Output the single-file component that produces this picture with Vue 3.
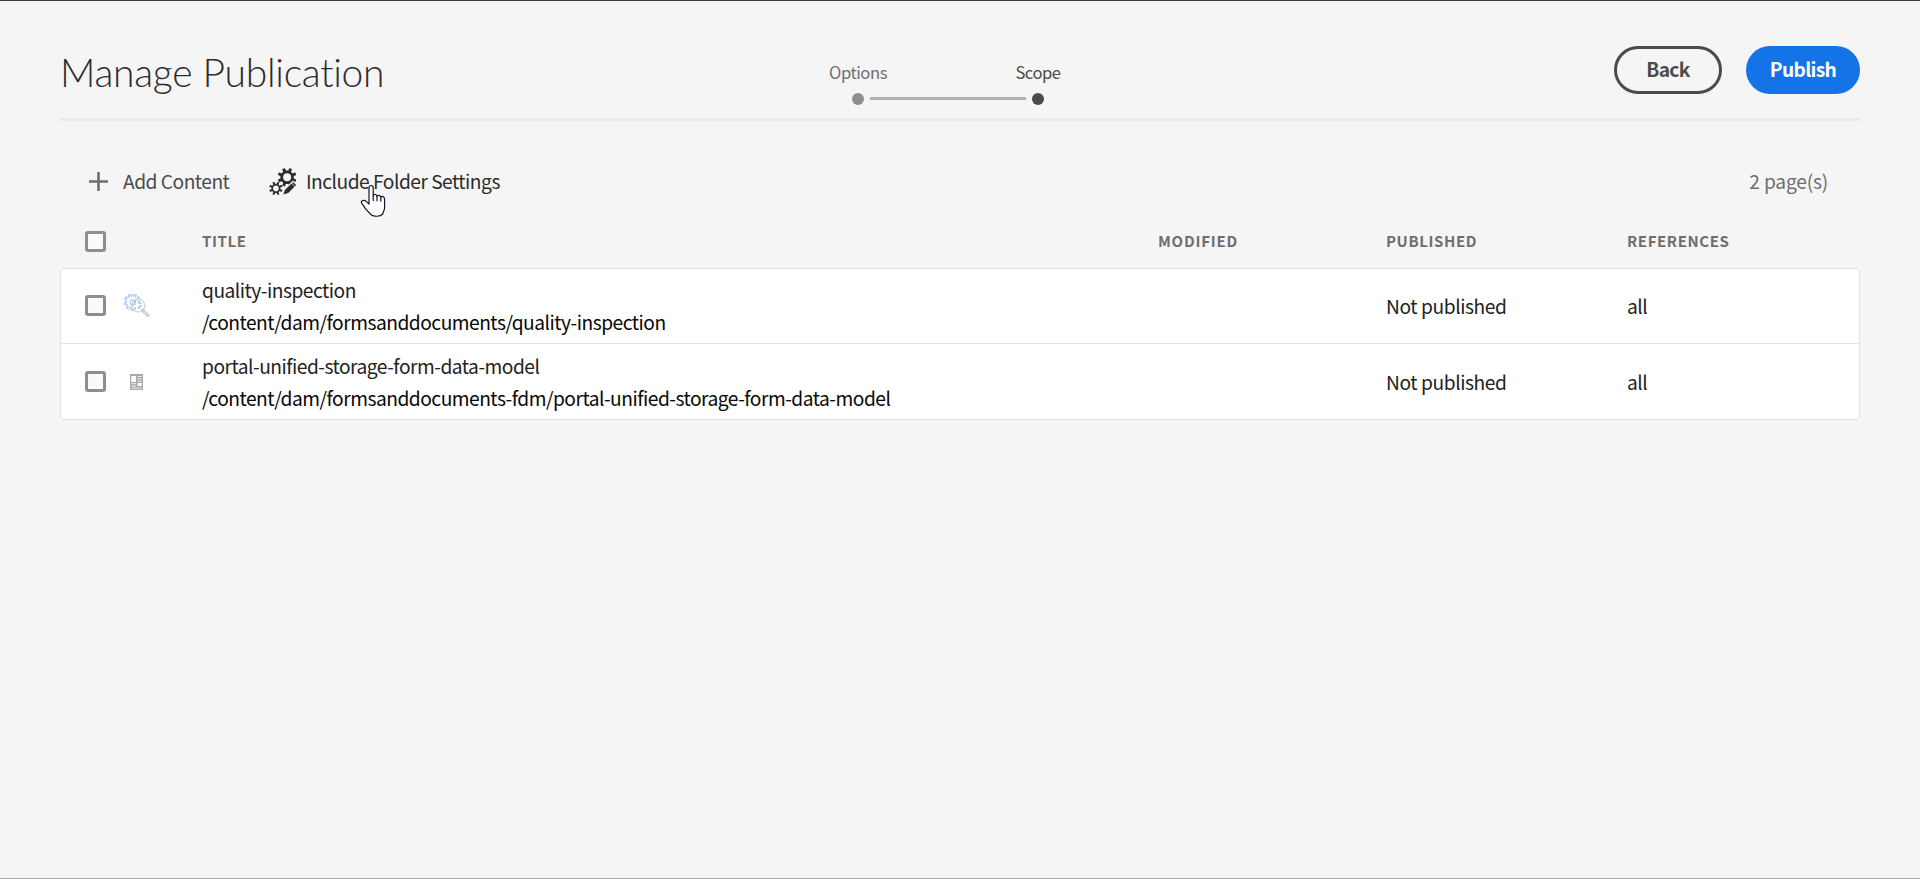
<script setup>
const rows = [
  {
    icon: 'inspection',
    title: 'quality-inspection',
    path: '/content/dam/formsanddocuments/quality-inspection',
    published: 'Not published',
    references: 'all',
  },
  {
    icon: 'model',
    title: 'portal-unified-storage-form-data-model',
    path: '/content/dam/formsanddocuments-fdm/portal-unified-storage-form-data-model',
    published: 'Not published',
    references: 'all',
  },
]

// Outline of a toothed wheel centred on (cx, cy)
function gear(cx, cy, inner, outer, teeth) {
  const points = []
  const step = (Math.PI * 2) / teeth
  const at = (r, a) => `${(cx + r * Math.sin(a)).toFixed(2)} ${(cy - r * Math.cos(a)).toFixed(2)}`
  for (let i = 0; i < teeth; i++) {
    const a = (i + 0.5) * step
    points.push(at(inner, a - step * 0.27), at(outer, a - step * 0.2), at(outer, a + step * 0.2), at(inner, a + step * 0.27))
  }
  return `M${points.join('L')}Z`
}

function ring(cx, cy, r) {
  return `M${cx - r} ${cy}a${r} ${r} 0 1 0 ${2 * r} 0a${r} ${r} 0 1 0 ${-2 * r} 0Z`
}

const bigGear = gear(18.1, 9.3, 6.8, 9.5, 8) + ring(18.1, 9.3, 4)
const smallGear = gear(6.9, 20.4, 4.6, 6.8, 8) + ring(6.9, 20.4, 2.8)
const blueGear = gear(8.4, 8, 6.2, 8, 9)
</script>

<template>
  <main class="page">
    <header class="header">
      <h1 class="heading">Manage Publication</h1>
      <ol class="steps">
        <li class="step"><span>Options</span><i class="dot"></i></li>
        <li class="step current"><span>Scope</span><i class="dot"></i></li>
      </ol>
      <div class="actions">
        <button class="btn back">Back</button>
        <button class="btn publish">Publish</button>
      </div>
    </header>

    <div class="toolbar">
      <button class="tool add">
        <svg class="plus" width="19" height="19" viewBox="0 0 19 19"><path d="M9.5 0V19M0 9.5H19" stroke="#6e6e6e" stroke-width="2.6" /></svg>
        <span>Add Content</span>
      </button>
      <button class="tool include">
        <svg class="gears" width="28" height="28" viewBox="0 0 28 28" fill="#2c2c2c" fill-rule="evenodd">
          <path :d="bigGear" />
          <path :d="smallGear" />
          <path d="M13.4 27.4L15.4 21.6L24 13.2L28.2 17L19.4 25.6Z" stroke="#f5f5f5" stroke-width="1.2" />
          <path d="M22.4 15L26.2 18.8" stroke="#f5f5f5" stroke-width=".8" />
        </svg>
        <span>Include Folder Settings</span>
        <svg class="cursor" width="26" height="34" viewBox="0 0 26 34">
          <path
            d="M9 19V4.2C9 .6 13.2.6 13.2 4.2V12C13.4 9.8 17 10 17 12.4C17.4 10.6 20.8 11 20.8 13.4C21.4 11.8 24.6 12.2 24.6 15.2V23.5C24.6 26.5 23 27.6 22.8 30C20 32.8 14 32.8 11.4 31C9 28.6 6.4 26 4.6 23.4C3.4 21.4 1.6 19.8 1.2 18.2C1.6 15.8 4.6 15.8 6.2 17.4L9 20Z"
            fill="#fff" stroke="#14142b" stroke-width="1.2" stroke-linejoin="round" />
          <path d="M13.2 12V16.6M17 12.4V16.8M20.8 13.4V17.2" fill="none" stroke="#14142b" stroke-width="1.2" stroke-linecap="round" />
        </svg>
      </button>
      <span class="count">2 page(s)</span>
    </div>

    <section>
      <div class="grid columns">
        <i class="check"></i>
        <span></span>
        <span class="label">TITLE</span>
        <span class="label modified">MODIFIED</span>
        <span class="label">PUBLISHED</span>
        <span class="label">REFERENCES</span>
      </div>
      <div class="list">
        <div v-for="row in rows" :key="row.path" class="grid row">
          <i class="check"></i>
          <span class="thumb">
            <svg v-if="row.icon === 'inspection'" class="inspection" width="28" height="26" viewBox="0 0 28 26" fill="none">
              <path :d="blueGear" stroke="#a0c8f8" stroke-width="1.5" stroke-dasharray="3 .7" />
              <circle cx="14.4" cy="11.6" r="6.4" fill="#fff" stroke="#d2d2d2" stroke-width="1.2" />
              <path d="M9.6 8.6l2-2M14.6 6.8l.6 2.2l2.2.4M17.6 12l-2.4.8l-.4 2.4M12 15l-1.8-1" stroke="#8fc0f8" stroke-width="1.5" />
              <circle cx="8.9" cy="8.5" r="2.6" stroke="#b0cdec" stroke-width="1.3" />
              <path d="M18.6 16.2L23.8 21.4" stroke="#c8c8c8" stroke-width="3.2" stroke-linecap="round" />
              <path d="M19.8 17.4L23.6 21.2" stroke="#ededed" stroke-width="1.2" />
            </svg>
            <svg v-else class="model" width="13" height="16" viewBox="0 0 13 16">
              <path d="M0 0H13V16H0Z" fill="#a9a9a9" />
              <path d="M1.3 2H6V8H1.3ZM7.6 9H11.7V12H7.6Z" fill="#fff" />
              <path d="M7.4 2.5H11.7M7.4 4.8H11.7M7.4 7.1H11.7M1.3 9.6H6M1.3 12H6M1.3 14.2H11.7" stroke="#ececec" stroke-width="1" />
            </svg>
          </span>
          <div class="name">
            <div>{{ row.title }}</div>
            <div class="path">{{ row.path }}</div>
          </div>
          <span></span>
          <span class="published">{{ row.published }}</span>
          <span>{{ row.references }}</span>
        </div>
      </div>
    </section>
  </main>
</template>

<style>
body {
  background: #f5f5f5;
}
</style>

<style scoped>
.page {
  box-sizing: border-box;
  height: 879px;
  padding: 0 60px;
  overflow: hidden;
  background: #f5f5f5;
  border-top: 1px solid #3c3c3c;
  border-bottom: 1px solid #a9abb0;
  font-family: "Noto Sans CJK SC", "Noto Sans", sans-serif;
  font-size: 19.2px;
  line-height: 32px;
  letter-spacing: -0.5px;
  color: #222;
  white-space: nowrap;
}

.header {
  display: grid;
  grid-template-columns: 708px 1fr auto;
  height: 117px;
  border-bottom: 3px solid #eaeaea;
}

.heading {
  margin: 41px 0 0;
  font-family: Lato, sans-serif;
  font-size: 39px;
  font-weight: 300;
  line-height: 60px;
  letter-spacing: -0.28px;
  color: #2c2c2c;
}

.steps {
  display: flex;
  margin: 59px 0 0;
  padding: 0;
  list-style: none;
  font-size: 16.6px;
  line-height: 24px;
  letter-spacing: -0.45px;
  color: #6e6e6e;
}

.step {
  position: relative;
  display: flex;
  flex-direction: column;
  align-items: center;
  width: 180px;
}

.dot {
  width: 12px;
  height: 12px;
  margin-top: 9px;
  border-radius: 50%;
  background: #8e8e8e;
}

.step:first-child::after {
  content: "";
  position: absolute;
  left: 102px;
  top: 37px;
  width: 156px;
  height: 3px;
  background: #b3b3b3;
}

.current {
  color: #4b4b4b;
}

.current .dot {
  background: #4b4b4b;
}

.actions {
  display: flex;
  gap: 24px;
  margin-top: 45px;
}

button {
  padding: 0;
  border: 0;
  background: none;
  font: inherit;
  letter-spacing: inherit;
  color: #4b4b4b;
}

.btn {
  box-sizing: border-box;
  height: 48px;
  padding-bottom: 2px;
  border-radius: 24px;
  font-weight: 700;
  letter-spacing: -0.65px;
}

.back {
  width: 108px;
  border: 3px solid #4b4b4b;
}

.publish {
  width: 114px;
  background: #1473e6;
  color: #fff;
}

.toolbar {
  display: flex;
  align-items: center;
  height: 48px;
  margin-top: 36px;
  padding: 0 32px 0 29px;
}

.tool {
  position: relative;
  display: flex;
  align-items: center;
}

.add {
  width: 180px;
  gap: 15px;
}

.plus {
  margin-top: 1px;
}

.include {
  gap: 9px;
  color: #2c2c2c;
}

.gears {
  margin-top: 2px;
}

.cursor {
  position: absolute;
  left: 91px;
  top: 19px;
}

.count {
  margin-left: auto;
  letter-spacing: -0.2px;
  color: #6e6e6e;
}

.grid {
  display: grid;
  grid-template-columns: 38px 79px 956px 228px 241px 1fr;
  align-items: center;
  padding-left: 25px;
}

.columns {
  height: 53px;
  padding-top: 10px;
  font-size: 15px;
  font-weight: 700;
  letter-spacing: 0.6px;
  color: #6e6e6e;
}

.label {
  padding-bottom: 1px;
}

.modified {
  letter-spacing: 0.8px;
}

.check {
  box-sizing: border-box;
  width: 21px;
  height: 21px;
  border: 3px solid #8e8e8e;
  border-radius: 3px;
  background: #fafafa;
}

.list {
  border: 1px solid #e1e1e1;
  border-radius: 5px;
  background: #fff;
}

.row {
  height: 74px;
  padding-left: 24px;
}

.row:first-child .check {
  margin-bottom: 1px;
}

.row + .row {
  border-top: 1px solid #e1e1e1;
  height: 75px;
}

.thumb {
  display: flex;
}

.inspection {
  margin: 2px 0 0 1px;
}

.model {
  margin: 1px 0 0 7px;
}

.path {
  color: #080808;
}

.published {
  letter-spacing: -0.42px;
}
</style>
